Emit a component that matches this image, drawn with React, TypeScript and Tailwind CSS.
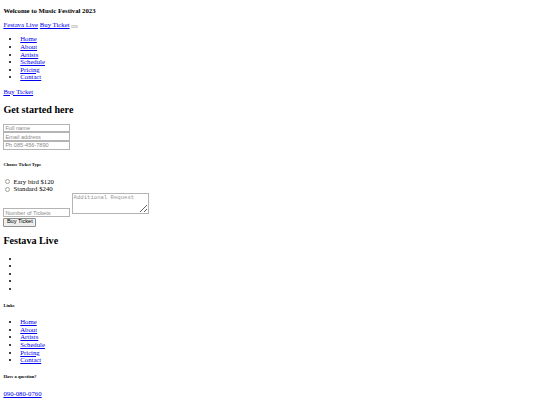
const navLinks = ["Home", "About", "Artists", "Schedule", "Pricing", "Contact"];

function TextLink({ children }: { children: React.ReactNode }) {
  return (
    <a href="#" className="text-[#0000ee] underline">
      {children}
    </a>
  );
}

function LinkList() {
  return (
    <ul className="my-[6.75px] list-disc pl-[16.875px]">
      {navLinks.map((label) => (
        <li key={label}>
          <TextLink>{label}</TextLink>
        </li>
      ))}
    </ul>
  );
}

const fieldClass =
  "block h-[8.7px] w-[66.5px] border border-[#b4b4b4] bg-white px-[1px] font-['Liberation_Sans',Arial,sans-serif] text-[5.625px] leading-none text-black outline-none placeholder:text-[#8a8a8a]";

const radioClass =
  "ml-[2.1px] mr-[1.3px] inline-block h-[5px] w-[5px] appearance-none rounded-full border border-[#a0a0a0] bg-white align-[-0.6px]";

export default function App() {
  return (
    <div className="flow-root min-h-[405px] bg-white px-[3.375px] font-['Liberation_Serif','Times_New_Roman',serif] text-[6.75px] leading-[1.125] text-black">
      {/* Header */}
      <header>
        <p className="my-[6.75px] font-bold">Welcome to Music Festival 2023</p>
        <nav>
          <div>
            <TextLink>Festava Live</TextLink> <TextLink>Buy Ticket</TextLink>{" "}
            <button
              type="button"
              className="inline-block h-[2.8px] w-[6.75px] rounded-[1px] border border-[#d0d0d0] bg-[#e4e4e4] align-baseline"
            />
          </div>
          <LinkList />
          <TextLink>Buy Ticket</TextLink>
        </nav>
      </header>

      {/* Ticket form */}
      <section>
        <h2 className="my-[8.4px] text-[10.125px] font-bold">Get started here</h2>
        <form>
          <input className={fieldClass} placeholder="Full name" />
          <input className={fieldClass} placeholder="Email address" />
          <input className={fieldClass} placeholder="Ph 085-456-7890" />
          <h6 className="mb-[10.5px] mt-[12.5px] text-[4.52px] font-bold">Choose Ticket Type</h6>
          <div>
            <label>
              <input type="radio" name="ticket" className={radioClass} /> Eary bird $120
            </label>
          </div>
          <div>
            <label>
              <input type="radio" name="ticket" className={radioClass} /> Standard $240
            </label>
          </div>
          <div className="flex items-end">
            <input className={fieldClass} placeholder="Number of Tickets" />
            <textarea
              rows={3}
              className="mb-[3px] ml-[1.7px] block h-[21px] w-[77px] resize-y border border-[#b4b4b4] bg-white px-[1px] py-[1px] font-['Liberation_Mono','Courier_New',monospace] text-[5.625px] leading-[1.15] outline-none placeholder:text-[#9a9a9a]"
              placeholder="Additional Request"
            />
          </div>
          <div className="mt-[0.6px]">
            <button
              type="submit"
              className="h-[8.6px] rounded-[1px] border border-[#8f8f8f] bg-[#efefef] px-[2.5px] font-['Liberation_Sans',Arial,sans-serif] text-[5.625px] leading-none text-black"
            >
              Buy Ticket
            </button>
          </div>
        </form>
      </section>

      {/* Footer */}
      <footer>
        <h2 className="my-[8.4px] text-[10.125px] font-bold">Festava Live</h2>
        <ul className="my-[6.75px] list-disc pl-[16.875px]">
          {[0, 1, 2, 3, 4].map((i) => (
            <li key={i} className="h-[7.5px]" />
          ))}
        </ul>
        <h6 className="my-[10.5px] text-[4.52px] font-bold">Links</h6>
        <LinkList />
        <h6 className="my-[10.5px] text-[4.52px] font-bold">Have a question?</h6>
        <p className="my-[6.75px]">
          <TextLink>090-080-0760</TextLink>
        </p>
        <p className="my-[6.75px]">
          <TextLink>hello@company.com</TextLink>
        </p>
      </footer>
    </div>
  );
}
